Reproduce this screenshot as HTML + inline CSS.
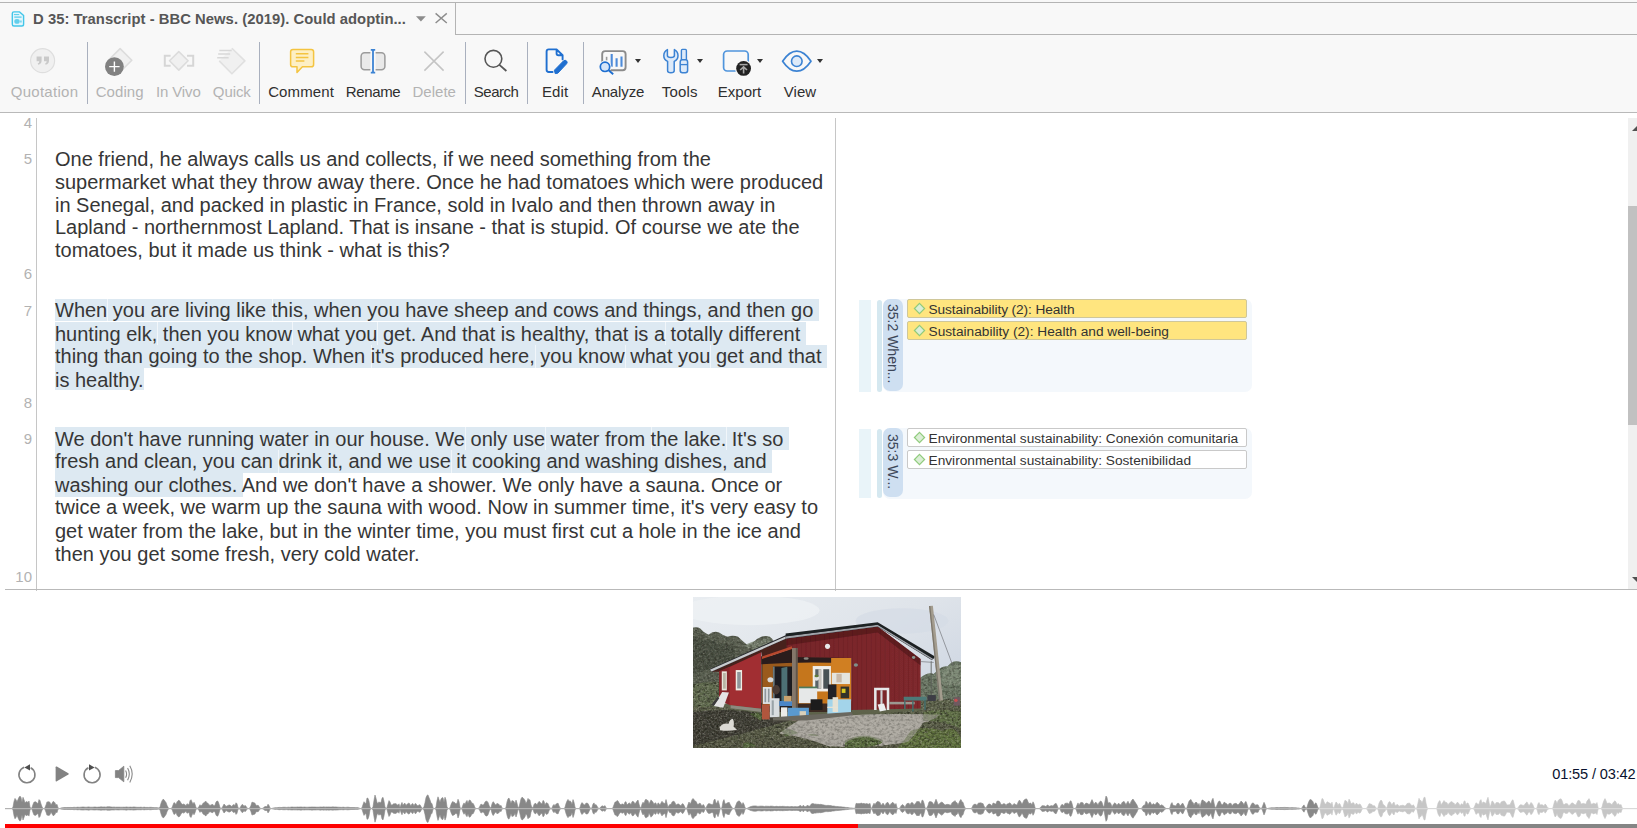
<!DOCTYPE html>
<html lang="en">
<head>
<meta charset="utf-8">
<title>D 35: Transcript</title>
<style>
html,body{margin:0;padding:0;}
body{width:1637px;height:828px;position:relative;overflow:hidden;background:#fff;font-family:"Liberation Sans",sans-serif;}
.abs{position:absolute;}
#hdr{position:absolute;left:0;top:0;width:1637px;height:112px;background:#f8f8f8;}
#topline{position:absolute;left:0;top:2px;width:1637px;height:1px;background:#b4b4b4;}
#tabv{position:absolute;left:455px;top:3px;width:1px;height:32px;background:#b4b4b4;}
#tabh{position:absolute;left:455px;top:34px;width:1182px;height:1px;background:#b4b4b4;}
#tbline{position:absolute;left:0;top:112px;width:1637px;height:1px;background:#b9b9b9;}
#title{position:absolute;left:33px;top:10px;letter-spacing:0.04px;font:bold 14.8px "Liberation Sans",sans-serif;color:#565656;white-space:pre;line-height:18px;}
.sep{position:absolute;top:42px;width:1px;height:62px;background:#a9b0be;}
.lbl{position:absolute;top:83px;font:15px "Liberation Sans",sans-serif;line-height:18px;color:#2f2f2f;white-space:pre;}
.lbl.dis{color:#b3b3b3;}
.dd{position:absolute;top:59px;width:0;height:0;border-left:3px solid transparent;border-right:3px solid transparent;border-top:4px solid #333;}
#doc{position:absolute;left:0;top:113px;width:1637px;height:477px;background:#fff;}
#gutter{position:absolute;left:36px;top:118px;width:1px;height:473px;background:#c6c6c6;}
#docr{position:absolute;left:835px;top:118px;width:1px;height:473px;background:#c6c6c6;}
#docb{position:absolute;left:5px;top:589px;width:1632px;height:1px;background:#b9b9b9;}
.ln{position:absolute;left:0;width:32px;text-align:right;font:15px "Liberation Sans",sans-serif;color:#b2b2b2;line-height:16px;}
.para{position:absolute;left:55px;width:790px;font:20px "Liberation Sans",sans-serif;line-height:23px;color:#363636;white-space:pre;margin:0;}
.hl{position:absolute;display:block;background:#dde9f2;}
.gp{position:absolute;display:block;width:1px;background:#f1f6fa;}
.code{position:absolute;left:907px;width:338px;height:17px;border-radius:2px;border:1px solid #c9c9c9;box-sizing:content-box;}
.code.y{background:#ffe57f;border-color:#cfc79a;}
.code.w{background:#fff;}
.code span{position:absolute;left:20.5px;top:1.5px;font:13.7px "Liberation Sans",sans-serif;line-height:16px;color:#333;white-space:pre;}
.dia{position:absolute;left:5px;top:2px;}
.vl{writing-mode:vertical-rl;width:20px;font:14px "Liberation Sans",sans-serif;line-height:20px;color:#3c4658;white-space:pre;}
.vlabel{position:absolute;font:13.4px "Liberation Sans",sans-serif;color:#3a4456;white-space:pre;transform-origin:0 0;transform:rotate(90deg);line-height:16px;}
#time{position:absolute;right:1.5px;top:765.5px;letter-spacing:-0.15px;font:14.6px "Liberation Sans",sans-serif;line-height:16px;color:#08112e;white-space:pre;}
</style>
</head>
<body>
<div id="hdr">
<div id="topline"></div><div id="tabv"></div><div id="tabh"></div>
<div id="title">D 35: Transcript - BBC News. (2019). Could adoptin...</div>
<div class="sep" style="left:87px"></div>
<div class="sep" style="left:259px"></div>
<div class="sep" style="left:465px"></div>
<div class="sep" style="left:527px"></div>
<div class="sep" style="left:583px"></div>
<div class="lbl dis" style="left:-15.5px;width:120px;text-align:center;letter-spacing:0.28px">Quotation</div>
<div class="lbl dis" style="left:59.7px;width:120px;text-align:center;letter-spacing:0.09px">Coding</div>
<div class="lbl dis" style="left:118.3px;width:120px;text-align:center;letter-spacing:-0.11px">In Vivo</div>
<div class="lbl dis" style="left:171.8px;width:120px;text-align:center;letter-spacing:-0.09px">Quick</div>
<div class="lbl" style="left:241.1px;width:120px;text-align:center;letter-spacing:0.13px">Comment</div>
<div class="lbl" style="left:313.0px;width:120px;text-align:center;letter-spacing:-0.35px">Rename</div>
<div class="lbl dis" style="left:374.2px;width:120px;text-align:center;letter-spacing:0.04px">Delete</div>
<div class="lbl" style="left:436.1px;width:120px;text-align:center;letter-spacing:-0.51px">Search</div>
<div class="lbl" style="left:495.2px;width:120px;text-align:center;letter-spacing:0.14px">Edit</div>
<div class="lbl" style="left:558.0px;width:120px;text-align:center;letter-spacing:-0.13px">Analyze</div>
<div class="lbl" style="left:619.7px;width:120px;text-align:center;letter-spacing:0.16px">Tools</div>
<div class="lbl" style="left:679.5px;width:120px;text-align:center;letter-spacing:0.02px">Export</div>
<div class="lbl" style="left:740.0px;width:120px;text-align:center;letter-spacing:0.06px">View</div>
<div class="dd" style="left:635.0px"></div>
<div class="dd" style="left:697.4px"></div>
<div class="dd" style="left:757.3px"></div>
<div class="dd" style="left:817.4px"></div>
<!--ICONS-->
<div id="tbline"></div>
</div>
<svg class="abs" style="left:0;top:0" width="840" height="112" viewBox="0 0 840 112">
<!-- tab document icon -->
<g>
<path d="M13.9 11.9 H19.6 L23.6 15.6 V24.2 Q23.6 26 21.8 26 H13.9 Q12.3 26 12.3 24.2 V13.6 Q12.3 11.9 13.9 11.9 Z" fill="#e4f6fc" stroke="#43c6e9" stroke-width="1.4" stroke-linejoin="round"/>
<path d="M14.3 14.6 H18.8" stroke="#43c6e9" stroke-width="0.9" stroke-linecap="round"/>
<path d="M14.3 17.1 H21.6" stroke="#5ccdeb" stroke-width="1.3"/>
<ellipse cx="17" cy="21.4" rx="2.7" ry="2.4" fill="#62cfec"/>
<path d="M20 21.4 H21.8" stroke="#7ed8f0" stroke-width="2"/>
</g>
<!-- tab dropdown + close -->
<path d="M416 16.2 H425.8 L420.9 21.4 Z" fill="#8c8c8c"/>
<path d="M435.6 13.4 L446.8 23 M446.8 13.4 L435.6 23" stroke="#8c8c8c" stroke-width="1.4" fill="none"/>
<!-- Quotation (disabled) -->
<circle cx="42.6" cy="60.7" r="12" fill="#f0f0f0" stroke="#dedede" stroke-width="1.2"/>
<path d="M36.6 56.6 h5 v4.2 q0 3.2 -3.4 4 l-0.5 -1.3 q1.6 -0.6 1.6 -2.3 h-2.7 z M44 56.6 h5 v4.2 q0 3.2 -3.4 4 l-0.5 -1.3 q1.6 -0.6 1.6 -2.3 h-2.7 z" fill="#c9c9c9"/>
<!-- Coding (disabled tag + plus circle) -->
<path d="M120.1 48.6 L131.8 60.3 L120.1 72 L108.4 60.3 Z" fill="#f0f0f0" stroke="#dcdcdc" stroke-width="1.6" stroke-linejoin="round"/>
<circle cx="114.4" cy="66.6" r="9.4" fill="#818181"/>
<path d="M114.4 61.4 V71.8 M109.2 66.6 H119.6" stroke="#fff" stroke-width="1.4"/>
<!-- In Vivo (disabled) -->
<path d="M170.6 55.8 H164.8 V65.8 H170.6 M187 55.8 H193.2 V65.8 H187" fill="none" stroke="#d6d6d6" stroke-width="2"/>
<path d="M178.8 51.6 L188.1 60.8 L178.8 70.1 L169.5 60.8 Z" fill="#f0f0f0" stroke="#dcdcdc" stroke-width="1.6" stroke-linejoin="round"/>
<!-- Quick (disabled) -->
<path d="M231.9 48.3 L244.9 60.9 L231.9 73.8 L219.2 60.9 Z" fill="#f0f0f0"/>
<path d="M231.9 48.3 L244.9 60.9 L231.9 73.8 L219.2 60.9" fill="none" stroke="#e0e0e0" stroke-width="1.6" stroke-linejoin="round"/>
<path d="M219.3 50.5 H231.7 M218.2 54.1 H230.2 M217.2 57.7 H228.6" stroke="#d8d8d8" stroke-width="1.5"/>
<!-- Comment -->
<path d="M293 49.4 H311.2 Q313.6 49.4 313.6 51.8 V64.4 Q313.6 66.8 311.2 66.8 H302.4 L297 72.4 V66.8 H293 Q290.6 66.8 290.6 64.4 V51.8 Q290.6 49.4 293 49.4 Z" fill="#fdefc4" stroke="#f4c440" stroke-width="1.5" stroke-linejoin="round"/>
<path d="M295.8 53.7 H308.4 M295.8 57.4 H308.4 M295.8 61.1 H304.4" stroke="#f4c440" stroke-width="1.5"/>
<!-- Rename -->
<rect x="361.1" y="52.7" width="23.8" height="17" rx="3.5" fill="#e9e9e9" stroke="#9b9b9b" stroke-width="1.5"/>
<rect x="370.4" y="50" width="5.2" height="22.6" fill="#f8f8f8"/>
<path d="M373 49.6 V72.8 M370.8 49.8 H375.2 M370.8 72.6 H375.2" stroke="#3c83d3" stroke-width="1.8"/>
<!-- Delete (disabled) -->
<path d="M424.4 51.6 L443.6 70.6 M443.6 51.6 L424.4 70.6" stroke="#c4c4c4" stroke-width="1.5"/>
<!-- Search -->
<circle cx="493.4" cy="58.8" r="8.4" fill="none" stroke="#565656" stroke-width="1.6"/>
<path d="M499.4 64.8 L506.4 71" stroke="#565656" stroke-width="1.8"/>
<!-- Edit -->
<path d="M556.6 49.4 H548.8 Q546.6 49.4 546.6 51.6 V69.8 Q546.6 72 548.8 72 H552.6 M556.6 49.4 L562.6 55.2 V59.4 M556.6 49.4 V53.4 Q556.6 55.2 558.4 55.2 H562.6" fill="none" stroke="#1f6fd0" stroke-width="1.9" stroke-linejoin="round" stroke-linecap="round"/>
<path d="M555.2 73.6 L554.4 70.2 L563.6 60.8 Q565.2 59.6 566.6 61 Q567.8 62.4 566.6 63.8 L557.8 73.2 Z" fill="#1f6fd0" stroke="#1f6fd0" stroke-width="1" stroke-linejoin="round"/>
<!-- Analyze -->
<rect x="602.2" y="51.1" width="23.4" height="19.2" rx="3" fill="none" stroke="#8b8b8b" stroke-width="1.9"/>
<path d="M606.6 56.8 V60.4" stroke="#9a9a9a" stroke-width="1.6"/>
<path d="M611.7 54 V66.8 M616.6 58.2 V66.8 M621.5 56.4 V66.8" stroke="#4d8bd9" stroke-width="2.1"/>
<circle cx="605" cy="66.8" r="6.4" fill="#f8f8f8"/>
<circle cx="605" cy="66.8" r="4.7" fill="#d6e5f8" stroke="#1f6fd0" stroke-width="1.7"/>
<path d="M608.6 70.2 L613.2 74.2" stroke="#1f6fd0" stroke-width="1.9"/>
<!-- Tools -->
<path d="M667.4 49.6 V55.6 Q667.4 57.6 670.9 57.6 Q674.4 57.6 674.4 55.6 V49.6 Q678 51.4 678 55.8 Q678 59.8 674.2 61.4 V70.8 Q674.2 72.8 670.9 72.8 Q667.6 72.8 667.6 70.8 V61.4 Q663.8 59.8 663.8 55.8 Q663.8 51.4 667.4 49.6 Z" fill="#ddeaf9" stroke="#3c83d3" stroke-width="1.5" stroke-linejoin="round"/>
<path d="M682.4 49.4 H685.4 Q686.4 49.4 686.4 50.4 V59.6 H681.4 V50.4 Q681.4 49.4 682.4 49.4 Z" fill="#ddeaf9" stroke="#3c83d3" stroke-width="1.4"/>
<path d="M680.2 62 Q680.2 59.8 682.4 59.8 H685.4 Q687.6 59.8 687.6 62 V70.6 Q687.6 72.8 685.4 72.8 H682.4 Q680.2 72.8 680.2 70.6 Z" fill="#ddeaf9" stroke="#3c83d3" stroke-width="1.5"/>
<path d="M680.2 64.6 H687.6" stroke="#3c83d3" stroke-width="1.3"/>
<!-- Export -->
<rect x="723.6" y="51" width="24.6" height="20" rx="3.6" fill="none" stroke="#4f94dc" stroke-width="1.7"/>
<circle cx="743.6" cy="68.4" r="8.6" fill="#f8f8f8"/>
<circle cx="743.6" cy="68.4" r="7.4" fill="#222"/>
<path d="M739.6 64.6 H747.6" stroke="#a8a8a8" stroke-width="1.5"/>
<path d="M743.6 73.6 V67.6 M740.2 70 L743.6 66.8 L747 70" fill="none" stroke="#a8a8a8" stroke-width="1.6"/>
<!-- View -->
<path d="M782.6 61.2 Q789.4 51.2 796.8 51.2 Q804.2 51.2 811 61.2 Q804.2 71.2 796.8 71.2 Q789.4 71.2 782.6 61.2 Z" fill="none" stroke="#3c83d3" stroke-width="1.7" stroke-linejoin="round"/>
<circle cx="796.8" cy="61.2" r="5.3" fill="#ddeaf9" stroke="#3c83d3" stroke-width="1.6"/>
</svg>
<div id="doc"></div>
<div id="gutter"></div>
<div id="docr"></div>
<div class="ln" style="top:114.8px">4</div>
<div class="ln" style="top:150.8px">5</div>
<div class="ln" style="top:265.8px">6</div>
<div class="ln" style="top:302.8px">7</div>
<div class="ln" style="top:394.8px">8</div>
<div class="ln" style="top:430.8px">9</div>
<div class="ln" style="top:568.8px">10</div>
<div class="hls">
<i class="hl" style="left:55px;top:299px;width:763.8px;height:22px"></i>
<i class="hl" style="left:55px;top:322px;width:750.8px;height:23px"></i>
<i class="hl" style="left:55px;top:345px;width:772.1px;height:23px"></i>
<i class="hl" style="left:55px;top:368px;width:88.6px;height:22px"></i>
<i class="hl" style="left:55px;top:427px;width:734.0px;height:23px"></i>
<i class="hl" style="left:55px;top:450px;width:717.1px;height:23px"></i>
<i class="hl" style="left:55px;top:473px;width:187.9px;height:24px"></i>
<i class="gp" style="left:107px;top:299px;height:22px"></i>
<i class="gp" style="left:272px;top:299px;height:22px"></i>
<i class="gp" style="left:157px;top:322px;height:23px"></i>
<i class="gp" style="left:292px;top:322px;height:23px"></i>
<i class="gp" style="left:377px;top:322px;height:23px"></i>
<i class="gp" style="left:665px;top:322px;height:23px"></i>
<i class="gp" style="left:371px;top:345px;height:23px"></i>
<i class="gp" style="left:535px;top:345px;height:23px"></i>
<i class="gp" style="left:625px;top:345px;height:23px"></i>
<i class="gp" style="left:710px;top:345px;height:23px"></i>
<i class="gp" style="left:465px;top:427px;height:23px"></i>
<i class="gp" style="left:545px;top:427px;height:23px"></i>
<i class="gp" style="left:651px;top:427px;height:23px"></i>
<i class="gp" style="left:726px;top:427px;height:23px"></i>
<i class="gp" style="left:278px;top:450px;height:23px"></i>
<i class="gp" style="left:451px;top:450px;height:23px"></i>
</div>
<div class="para" style="top:148px">One friend, he always calls us and collects, if we need something from the</div>
<div class="para" style="top:171px">supermarket what they throw away there. Once he had tomatoes which were produced</div>
<div class="para" style="top:194px">in Senegal, and packed in plastic in France, sold in Ivalo and then thrown away in</div>
<div class="para" style="top:216px">Lapland - northernmost Lapland. That is insane - that is stupid. Of course we ate the</div>
<div class="para" style="top:239px">tomatoes, but it made us think - what is this?</div>
<div class="para" style="top:299px">When you are living like this, when you have sheep and cows and things, and then go </div>
<div class="para" style="top:323px">hunting elk, then you know what you get. And that is healthy, that is a totally different </div>
<div class="para" style="top:345px">thing than going to the shop. When it's produced here, you know what you get and that </div>
<div class="para" style="top:369px">is healthy.</div>
<div class="para" style="top:428px">We don't have running water in our house. We only use water from the lake. It's so </div>
<div class="para" style="top:450px">fresh and clean, you can drink it, and we use it cooking and washing dishes, and </div>
<div class="para" style="top:474px">washing our clothes. And we don't have a shower. We only have a sauna. Once or</div>
<div class="para" style="top:496px">twice a week, we warm up the sauna with wood. Now in summer time, it's very easy to</div>
<div class="para" style="top:520px">get water from the lake, but in the winter time, you must first cut a hole in the ice and</div>
<div class="para" style="top:543px">then you get some fresh, very cold water.</div>
<div id="docb"></div>
<!-- margin area: quotation 35:2 -->
<div class="abs" style="left:859px;top:300px;width:12px;height:92px;background:#e9f4f9"></div>
<div class="abs" style="left:877px;top:300px;width:5px;height:92px;background:#d5e8f0;border-radius:2.5px"></div>
<div class="abs" style="left:883px;top:299px;width:369px;height:93px;background:#f4f8fc;border-radius:7px"></div>
<div class="abs pill" style="left:883px;top:299px;width:20px;height:92px;background:#cedff1;border-radius:7px"><div class="vl" style="padding-top:5px">35:2 When...</div></div>
<div class="code y" style="top:299px"><svg class="dia" width="13" height="13" viewBox="0 0 13 13"><path d="M6.5 1.4 L11.6 6.5 L6.5 11.6 L1.4 6.5 Z" fill="#dbeed6" stroke="#8fcb7c" stroke-width="1.2"/></svg><span style="letter-spacing:-0.09px">Sustainability (2): Health</span></div>
<div class="code y" style="top:321px"><svg class="dia" width="13" height="13" viewBox="0 0 13 13"><path d="M6.5 1.4 L11.6 6.5 L6.5 11.6 L1.4 6.5 Z" fill="#dbeed6" stroke="#8fcb7c" stroke-width="1.2"/></svg><span>Sustainability (2): Health and well-being</span></div>
<!-- margin area: quotation 35:3 -->
<div class="abs" style="left:859px;top:429px;width:12px;height:69px;background:#e9f4f9"></div>
<div class="abs" style="left:877px;top:429px;width:5px;height:69px;background:#d5e8f0;border-radius:2.5px"></div>
<div class="abs" style="left:883px;top:428px;width:369px;height:71px;background:#f4f8fc;border-radius:7px"></div>
<div class="abs pill" style="left:883px;top:428px;width:20px;height:69px;background:#cedff1;border-radius:7px"><div class="vl" style="padding-top:6px">35:3 W...</div></div>
<div class="code w" style="top:428px"><svg class="dia" width="13" height="13" viewBox="0 0 13 13"><path d="M6.5 1.4 L11.6 6.5 L6.5 11.6 L1.4 6.5 Z" fill="#dbeed6" stroke="#8fcb7c" stroke-width="1.2"/></svg><span>Environmental sustainability: Conexión comunitaria</span></div>
<div class="code w" style="top:450px"><svg class="dia" width="13" height="13" viewBox="0 0 13 13"><path d="M6.5 1.4 L11.6 6.5 L6.5 11.6 L1.4 6.5 Z" fill="#dbeed6" stroke="#8fcb7c" stroke-width="1.2"/></svg><span>Environmental sustainability: Sostenibilidad</span></div>
<!-- scrollbar -->
<div class="abs" style="left:1628px;top:118px;width:9px;height:471px;background:#f0f0f0"></div>
<div class="abs" style="left:1628px;top:206px;width:9px;height:219px;background:#c1c1c1"></div>
<div class="abs" style="left:1632px;top:126.3px;width:0;height:0;border-left:5px solid transparent;border-right:5px solid transparent;border-bottom:5px solid #505050"></div>
<div class="abs" style="left:1632px;top:577px;width:0;height:0;border-left:5px solid transparent;border-right:5px solid transparent;border-top:5px solid #505050"></div>
<svg class="abs" style="left:693px;top:597px" width="268" height="151" viewBox="62 57 1267 713" preserveAspectRatio="none">
<defs>
<linearGradient id="sky" x1="0" y1="0" x2="1" y2="1">
<stop offset="0" stop-color="#e9edf1"/><stop offset="0.45" stop-color="#dfe4ea"/><stop offset="1" stop-color="#c3cddd"/>
</linearGradient>
<linearGradient id="gnd" x1="0" y1="0" x2="0" y2="1">
<stop offset="0" stop-color="#656c52"/><stop offset="1" stop-color="#535541"/>
</linearGradient>
<linearGradient id="gable" x1="0" y1="0" x2="1" y2="0">
<stop offset="0" stop-color="#76252a"/><stop offset="1" stop-color="#7f292d"/>
</linearGradient>
<pattern id="siding" width="22" height="10" patternUnits="userSpaceOnUse"><rect width="22" height="10" fill="none"/><rect x="0" width="3" height="10" fill="#5e171b" opacity="0.55"/></pattern>
<filter id="soft" x="-2%" y="-2%" width="104%" height="104%"><feGaussianBlur stdDeviation="2.2"/></filter>
<filter id="grain" x="0" y="0" width="100%" height="100%" color-interpolation-filters="sRGB"><feTurbulence type="fractalNoise" baseFrequency="0.07 0.09" numOctaves="2" seed="4"/><feColorMatrix type="matrix" values="0 0 0 0 0.1  0 0 0 0 0.1  0 0 0 0 0.07  1.1 1.1 0 0 -0.95"/></filter>
<filter id="grainw" x="0" y="0" width="100%" height="100%" color-interpolation-filters="sRGB"><feTurbulence type="fractalNoise" baseFrequency="0.11 0.12" numOctaves="2" seed="11"/><feColorMatrix type="matrix" values="0 0 0 0 0.85  0 0 0 0 0.84  0 0 0 0 0.8  1.4 1.4 0 0 -1.3"/></filter>
<clipPath id="gclip"><path d="M62 470 L185 460 L185 560 L240 585 L385 605 L440 645 L600 645 L820 618 L1140 590 L1140 540 L1329 540 L1329 770 L62 770 Z"/></clipPath>
<clipPath id="tclip"><path d="M62 215 Q70 190 95 205 Q110 225 135 235 Q160 215 185 225 Q205 240 225 245 Q250 235 275 245 Q295 265 320 285 Q345 275 365 255 Q395 235 425 245 Q440 255 445 270 L330 320 L150 400 L185 410 L185 470 L62 480 Z M1140 440 Q1170 410 1200 420 Q1235 380 1265 385 Q1290 350 1330 365 L1340 545 L1140 545 Z"/></clipPath>
<clipPath id="pc"><rect x="62" y="57" width="1267" height="713"/></clipPath>
</defs>
<g clip-path="url(#pc)"><g filter="url(#soft)">
<rect x="40" y="40" width="1320" height="760" fill="url(#sky)"/>
<ellipse cx="330" cy="120" rx="330" ry="70" fill="#eef1f4" opacity="0.8"/>
<ellipse cx="1050" cy="170" rx="220" ry="60" fill="#d4dbe6" opacity="0.7"/>
<!-- left trees -->
<path d="M40 215 Q70 190 95 205 Q110 225 135 235 Q160 215 185 225 Q205 240 225 245 Q250 235 275 245 Q295 265 320 285 Q345 275 365 255 Q395 235 425 245 Q440 255 445 270 L330 330 L200 395 L200 480 L40 480 Z" fill="#5b6152"/>
<path d="M40 250 Q80 230 110 260 Q150 250 180 280 Q230 270 260 300 L260 380 L40 420 Z" fill="#464c3f" opacity="0.85"/>
<path d="M300 290 Q340 262 380 262 Q420 240 440 262 L360 310 Z" fill="#7f8a78" opacity="0.8"/>
<!-- right trees -->
<path d="M1135 440 Q1170 410 1200 420 Q1235 380 1265 385 Q1290 350 1330 365 L1340 560 L1135 560 Z" fill="#6c7966"/>
<path d="M1240 400 Q1280 370 1330 380 L1330 470 L1240 470 Z" fill="#86937f" opacity="0.7"/>
<!-- ground -->
<path d="M40 470 L200 455 L200 560 L1360 540 L1360 800 L40 800 Z" fill="url(#gnd)"/>
<path d="M62 470 Q120 455 185 462 L185 575 L62 575 Z" fill="#5f6a4d"/>
<path d="M62 600 Q250 575 420 615 L520 640 L300 700 L62 760 Z" fill="#3f3e35"/>
<!-- gravel -->
<path d="M560 640 Q800 600 1230 612 Q1200 640 1150 650 Q1120 700 1080 740 Q900 775 700 760 Q600 720 470 700 Z" fill="#aeaaa2"/>
<path d="M600 660 Q850 625 1150 630 Q1100 690 1000 720 Q800 740 650 700 Z" fill="#bab6ae" opacity="0.8"/>
<path d="M780 735 Q870 690 960 735 Q960 770 780 770 Z" fill="#5c7040"/>
<path d="M1090 690 Q1160 660 1240 690 Q1330 640 1340 800 L1000 800 Q1060 740 1090 690 Z" fill="#61733f"/>
<path d="M1150 600 Q1250 580 1340 600 L1340 680 Q1240 640 1150 640 Z" fill="#607046"/>
<path d="M330 610 Q370 590 400 625 L380 640 Z" fill="#55693c"/>
<path d="M300 750 Q330 735 360 760 L300 770 Z M480 690 Q520 670 560 700 L500 715 Z M600 710 Q630 695 660 715 Z" fill="#5a6e42"/>
<g clip-path="url(#gclip)"><rect x="62" y="440" width="1267" height="330" filter="url(#grain)"/><rect x="62" y="440" width="1267" height="330" filter="url(#grainw)" opacity="0.4"/></g>
<g clip-path="url(#tclip)"><rect x="62" y="180" width="1267" height="380" filter="url(#grain)" opacity="0.7"/><rect x="62" y="180" width="1267" height="380" filter="url(#grainw)" opacity="0.3"/></g>
<path d="M560 640 Q800 600 1230 612 Q1200 640 1150 650 Q1120 700 1080 740 Q1000 760 960 745 Q870 690 780 745 Q740 765 700 760 Q600 720 470 700 Z" fill="#aaa69e" opacity="0.55"/>
<!-- long side wall -->
<path d="M185 398 L385 305 L385 585 L240 568 L185 545 Z" fill="#a12e31"/>
<path d="M150 410 L503 252 L530 296 L388 344 L385 318 L185 410 Z" fill="#47211f"/>
<path d="M185 408 L235 386 L235 566 L185 545 Z" fill="#85262a"/>
<path d="M240 568 L385 585 L385 600 L240 582 Z" fill="#8d8b80"/>
<!-- long side windows -->
<rect x="198" y="408" width="24" height="90" fill="#e9e6dc"/><rect x="204" y="416" width="13" height="74" fill="#b8b3a4"/>
<rect x="264" y="402" width="30" height="96" fill="#f0eee6"/><rect x="271" y="411" width="17" height="78" fill="#8f979b"/>
<!-- leaning board -->
<path d="M200 505 L232 508 L205 580 L160 572 Z" fill="#e4e4e4"/>
<path d="M160 572 L150 566 L178 528 L186 535 Z" fill="#3a3a3a"/>
<!-- porch interior -->
<path d="M385 340 L810 345 L810 600 L385 600 Z" fill="#3a2a22"/>
<path d="M390 360 L530 352 L530 560 L390 575 Z" fill="#9a5a1e"/>
<path d="M555 352 L810 345 L810 560 L555 560 Z" fill="#c5761f"/>
<path d="M385 335 L810 340 L810 372 Q600 360 385 375 Z" fill="#2c1d1a"/>
<rect x="715" y="345" width="95" height="215" fill="#d07f22"/>
<!-- door opening -->
<rect x="440" y="385" width="90" height="200" fill="#1d1d20"/>
<path d="M480 392 L508 386 L508 560 L480 565 Z" fill="#4d6f75"/>
<rect x="440" y="385" width="8" height="190" fill="#6a7a7e"/>
<!-- porch window -->
<rect x="628" y="383" width="86" height="120" fill="#f0eeea"/>
<rect x="640" y="398" width="28" height="92" fill="#5a6468"/><rect x="678" y="398" width="28" height="92" fill="#4a5256"/>
<rect x="655" y="398" width="12" height="92" fill="#c9c6c0"/>
<!-- gable wall -->
<path d="M505 252 L935 196 L1138 350 L1138 583 L810 590 L810 345 L530 340 L505 300 Z" fill="url(#gable)"/>
<path d="M505 252 L935 196 L1138 350 L1138 583 L810 590 L810 345 L530 340 L505 300 Z" fill="url(#siding)"/>
<path d="M505 252 L935 196 L1138 350 L1138 380 L935 225 L505 285 Z" fill="#4a1418" opacity="0.6"/>
<!-- roof -->
<path d="M140 398 L500 238 L935 181 L1202 343 L1192 356 L935 197 L503 254 L150 410 Z" fill="#26282d"/>
<path d="M142 400 L500 243 L500 254 L150 409 Z" fill="#c9ccce"/>
<path d="M500 243 L935 188 L1196 348 L1194 354 L935 196 L502 253 Z" fill="#aeb3b8" opacity="0.9"/>
<path d="M500 229 L935 176 L1206 338 L1201 348 L935 188 L500 242 Z" fill="#1e2024"/>
<path d="M388 348 L530 300 L530 345 L388 345 Z" fill="#2c1d1a"/>
<path d="M388 338 L530 290 L530 302 L388 350 Z" fill="#b7492f"/>
<!-- post -->
<rect x="530" y="298" width="26" height="345" fill="#84776a"/>
<rect x="548" y="298" width="8" height="345" fill="#5e554c"/>
<!-- lamps -->
<circle cx="698" cy="290" r="12" fill="#e8e8ea"/>
<ellipse cx="597" cy="347" rx="12" ry="6" fill="#8c8880"/>
<ellipse cx="832" cy="378" rx="10" ry="8" fill="#7f8f8a"/>
<ellipse cx="1105" cy="343" rx="8" ry="7" fill="#8a9590"/>
<!-- objects on porch -->
<rect x="563" y="486" width="86" height="72" fill="#e6e8e8"/><rect x="563" y="480" width="86" height="8" fill="#4d7a5a"/>
<rect x="718" y="415" width="86" height="53" fill="#e4e4de"/><rect x="740" y="420" width="25" height="40" fill="#c9b9a8"/>
<rect x="392" y="482" width="42" height="80" fill="#dfe3e6"/><rect x="400" y="490" width="8" height="64" fill="#8e979c"/><rect x="416" y="490" width="8" height="64" fill="#8e979c"/>
<rect x="425" y="535" width="46" height="90" fill="#d9dde0"/><rect x="434" y="545" width="10" height="70" fill="#9aa3a8"/>
<rect x="388" y="565" width="36" height="70" fill="#b0563c"/>
<rect x="470" y="548" width="60" height="24" fill="#4a86c8"/><rect x="492" y="524" width="36" height="26" fill="#c9a36e"/>
<rect x="478" y="578" width="30" height="48" fill="#ecece8"/><rect x="510" y="580" width="100" height="48" fill="#5a9ad0"/>
<rect x="566" y="596" width="30" height="38" fill="#d9cfb8"/>
<rect x="618" y="540" width="56" height="50" fill="#1c1c1e"/>
<rect x="700" y="470" width="40" height="70" fill="#232326"/><rect x="760" y="480" width="40" height="55" fill="#33302c"/>
<rect x="765" y="490" width="18" height="20" fill="#d8c820"/>
<rect x="697" y="540" width="112" height="76" fill="#a3d4ea"/><rect x="722" y="530" width="26" height="70" fill="#e6e2d4"/>
<rect x="697" y="575" width="50" height="6" fill="#e8e4d6"/>
<ellipse cx="428" cy="448" rx="14" ry="12" fill="#d9d9d9"/><ellipse cx="455" cy="495" rx="18" ry="22" fill="#4a3a34"/>
<ellipse cx="646" cy="440" rx="12" ry="12" fill="#e1e1e1"/><ellipse cx="646" cy="430" rx="10" ry="6" fill="#5f7a3a"/>
<path d="M440 640 L600 640 L820 615 L810 600 L440 625 Z" fill="#6b675e"/>
<!-- white frame + jug on right wall -->
<path d="M918 485 H990 V590 H978 V497 H930 V590 H918 Z" fill="#e6e8ea"/>
<rect x="948" y="497" width="10" height="80" fill="#cfd2d6"/>
<path d="M935 565 L965 560 L975 592 L945 598 Z" fill="#eceef0"/>
<rect x="990" y="552" width="120" height="12" fill="#9c9890"/>
<!-- table -->
<path d="M1058 528 L1166 528 L1166 546 L1058 546 Z" fill="#4d7a78"/>
<rect x="1060" y="546" width="7" height="40" fill="#456e6c"/><rect x="1098" y="546" width="7" height="52" fill="#456e6c"/><rect x="1155" y="546" width="7" height="44" fill="#456e6c"/>
<!-- pole + wire -->
<path d="M1178 100 L1196 98 L1244 545 L1226 548 Z" fill="#a39c8e"/>
<path d="M1178 100 L1184 99 L1232 547 L1226 548 Z" fill="#7d776c"/>
<path d="M1200 140 L1290 380" stroke="#6b6e72" stroke-width="3" fill="none"/>
<path d="M1188 360 V520" stroke="#5c5f5a" stroke-width="4" fill="none"/>
<path d="M1140 362 L1200 366" stroke="#6b6e72" stroke-width="3" fill="none"/>
<!-- distant objects -->
<rect x="1170" y="520" width="40" height="28" fill="#3c3e44"/><rect x="1295" y="530" width="30" height="40" fill="#6e5a60"/><circle cx="1305" cy="545" r="8" fill="#c85050"/>
<!-- dog -->
<path d="M188 672 Q200 650 230 655 Q235 635 250 632 Q258 645 254 670 L270 684 Q230 692 190 686 Z" fill="#dcdad4"/>
</g></g>
</svg>
<svg class="abs" style="left:0;top:755px" width="160" height="40" viewBox="0 755 160 40">
<!-- rewind -->
<path d="M24.2 767.3 A8 8 0 1 0 30.6 767.7" fill="none" stroke="#828282" stroke-width="1.6"/>
<path d="M30 764.2 V770.6 L24.4 767.4 Z" fill="#4e4e4e"/>
<!-- play -->
<path d="M55.6 767.2 Q55.6 766 56.8 766.6 L68.4 773.2 Q69.4 773.9 68.4 774.6 L56.8 781.3 Q55.6 781.9 55.6 780.7 Z" fill="#828282"/>
<!-- forward -->
<path d="M94.8 767.3 A8 8 0 1 1 88.4 767.7" fill="none" stroke="#828282" stroke-width="1.6"/>
<path d="M89 764.2 V770.6 L94.6 767.4 Z" fill="#4e4e4e"/>
<!-- speaker -->
<path d="M115.4 770.6 H118.6 L123.8 766.2 V781.8 L118.6 777.6 H115.4 Z" fill="#828282" stroke="#828282" stroke-width="0.8" stroke-linejoin="round"/>
<path d="M125.6 770.4 Q127.6 774 125.6 777.8 M127.6 768 Q131 774 127.6 780.2 M129.8 765.8 Q134.6 774 129.8 782.4" fill="none" stroke="#8a8a8a" stroke-width="1.1"/>
</svg>
<div id="time">01:55 / 03:42</div>
<svg class="abs" style="left:0;top:786px" width="1637" height="42" viewBox="0 786 1637 42">
<path d="M5,808.5 L6,808.5 L7,808.5 L8,808.5 L9,808.5 L10,808.5 L11,808.5 L12,808.5 L13,807.1 L14,801.4 L15,798.4 L16,799.7 L17,801.8 L18,799.5 L19,797.3 L20,796.1 L21,797.4 L22,802.2 L23,797.3 L24,799.7 L25,802.7 L26,801.7 L27,801.7 L28,802.5 L29,801.0 L30,806.9 L31,808.5 L32,807.6 L33,804.4 L34,802.1 L35,801.9 L36,801.8 L37,803.2 L38,803.6 L39,799.6 L40,800.6 L41,804.0 L42,806.7 L43,808.5 L44,808.5 L45,807.5 L46,804.9 L47,801.8 L48,802.2 L49,801.5 L50,802.6 L51,804.8 L52,803.3 L53,801.6 L54,801.7 L55,802.9 L56,805.2 L57,804.3 L58,807.8 L59,808.5 L60,808.5 L61,808.0 L62,807.8 L63,807.7 L64,807.6 L65,807.5 L66,807.6 L67,807.6 L68,807.4 L69,807.6 L70,807.4 L71,807.5 L72,807.5 L73,807.5 L74,807.2 L75,807.4 L76,807.4 L77,807.3 L78,807.1 L79,807.4 L80,807.2 L81,807.2 L82,807.0 L83,807.0 L84,807.0 L85,807.2 L86,807.2 L87,807.2 L88,806.9 L89,806.9 L90,807.2 L91,807.2 L92,807.2 L93,807.2 L94,807.0 L95,807.0 L96,807.1 L97,807.3 L98,807.1 L99,807.1 L100,807.0 L101,806.8 L102,806.9 L103,807.0 L104,806.9 L105,806.9 L106,807.2 L107,806.8 L108,806.8 L109,806.8 L110,806.8 L111,807.0 L112,807.0 L113,807.2 L114,806.9 L115,807.2 L116,807.2 L117,807.1 L118,807.2 L119,807.1 L120,807.2 L121,807.2 L122,807.2 L123,807.2 L124,807.1 L125,807.3 L126,806.9 L127,807.0 L128,807.2 L129,807.2 L130,807.1 L131,807.1 L132,807.3 L133,807.0 L134,806.9 L135,807.1 L136,807.2 L137,807.3 L138,807.3 L139,807.3 L140,807.3 L141,807.1 L142,807.4 L143,807.4 L144,807.1 L145,807.3 L146,807.5 L147,807.3 L148,807.5 L149,807.4 L150,807.3 L151,807.3 L152,807.4 L153,807.6 L154,807.6 L155,807.7 L156,807.6 L157,807.7 L158,807.8 L159,808.0 L160,807.1 L161,803.3 L162,800.8 L163,799.3 L164,799.7 L165,801.2 L166,802.5 L167,805.3 L168,807.3 L169,808.5 L170,808.5 L171,808.5 L172,807.7 L173,805.0 L174,802.6 L175,803.2 L176,804.5 L177,801.9 L178,800.7 L179,800.2 L180,801.3 L181,803.0 L182,804.3 L183,804.6 L184,803.8 L185,804.9 L186,805.8 L187,803.7 L188,804.4 L189,804.8 L190,800.7 L191,799.7 L192,802.1 L193,804.1 L194,802.3 L195,804.3 L196,807.6 L197,808.5 L198,808.0 L199,806.5 L200,804.7 L201,805.8 L202,805.1 L203,803.2 L204,802.7 L205,801.8 L206,801.3 L207,803.1 L208,803.2 L209,804.8 L210,805.4 L211,805.0 L212,804.4 L213,804.6 L214,805.9 L215,804.9 L216,802.1 L217,801.0 L218,801.3 L219,804.0 L220,807.6 L221,808.5 L222,807.9 L223,806.1 L224,804.1 L225,805.0 L226,806.5 L227,806.0 L228,805.4 L229,805.0 L230,805.1 L231,806.0 L232,806.6 L233,804.8 L234,804.7 L235,805.4 L236,802.8 L237,803.8 L238,807.6 L239,808.5 L240,808.0 L241,806.0 L242,804.6 L243,804.8 L244,806.5 L245,805.3 L246,806.3 L247,808.0 L248,808.5 L249,808.5 L250,807.6 L251,805.3 L252,802.1 L253,802.5 L254,802.7 L255,803.2 L256,805.2 L257,805.7 L258,805.1 L259,806.5 L260,808.1 L261,808.5 L262,808.5 L263,808.2 L264,807.3 L265,806.5 L266,806.6 L267,806.7 L268,804.2 L269,805.5 L270,807.9 L271,808.5 L272,808.5 L273,808.0 L274,807.9 L275,807.7 L276,807.7 L277,807.7 L278,807.6 L279,807.4 L280,807.4 L281,807.5 L282,807.5 L283,807.2 L284,807.3 L285,807.2 L286,807.4 L287,807.4 L288,807.2 L289,807.2 L290,807.4 L291,807.0 L292,807.1 L293,807.0 L294,807.3 L295,807.0 L296,807.3 L297,806.9 L298,807.1 L299,807.1 L300,807.0 L301,806.9 L302,807.1 L303,807.2 L304,807.0 L305,807.1 L306,807.2 L307,807.2 L308,807.2 L309,807.1 L310,807.1 L311,807.1 L312,806.9 L313,807.1 L314,807.0 L315,807.1 L316,807.1 L317,807.2 L318,807.1 L319,807.2 L320,806.9 L321,807.0 L322,807.1 L323,807.0 L324,806.8 L325,807.2 L326,806.9 L327,807.0 L328,807.0 L329,806.9 L330,807.1 L331,807.0 L332,807.0 L333,806.8 L334,807.1 L335,806.9 L336,807.0 L337,807.1 L338,807.2 L339,807.2 L340,807.3 L341,807.3 L342,807.4 L343,807.1 L344,807.3 L345,807.4 L346,807.4 L347,807.2 L348,807.2 L349,807.3 L350,807.5 L351,807.5 L352,807.5 L353,807.5 L354,807.6 L355,807.6 L356,807.7 L357,807.6 L358,807.7 L359,807.9 L360,808.5 L361,808.5 L362,807.7 L363,804.6 L364,801.7 L365,803.2 L366,803.5 L367,798.0 L368,798.3 L369,801.2 L370,807.0 L371,808.5 L372,808.5 L373,806.8 L374,800.3 L375,795.0 L376,798.2 L377,802.6 L378,803.5 L379,801.8 L380,802.8 L381,802.6 L382,798.2 L383,797.3 L384,801.3 L385,806.9 L386,808.5 L387,807.4 L388,803.9 L389,800.6 L390,802.0 L391,804.7 L392,805.2 L393,804.3 L394,803.6 L395,803.9 L396,803.5 L397,804.7 L398,805.3 L399,803.8 L400,807.6 L401,804.6 L402,802.4 L403,805.6 L404,803.7 L405,803.3 L406,805.4 L407,804.2 L408,803.7 L409,802.9 L410,804.4 L411,805.7 L412,803.8 L413,803.7 L414,806.0 L415,803.7 L416,803.7 L417,805.6 L418,805.7 L419,804.9 L420,804.7 L421,806.5 L422,808.0 L423,808.5 L424,806.6 L425,802.7 L426,797.6 L427,795.4 L428,794.9 L429,797.6 L430,800.0 L431,802.8 L432,803.8 L433,807.5 L434,808.5 L435,808.5 L436,807.0 L437,800.8 L438,796.8 L439,799.6 L440,802.3 L441,799.1 L442,797.7 L443,797.8 L444,802.2 L445,797.2 L446,799.8 L447,806.8 L448,808.5 L449,808.5 L450,807.7 L451,804.6 L452,802.3 L453,801.4 L454,802.4 L455,802.8 L456,803.9 L457,803.3 L458,799.2 L459,801.6 L460,807.2 L461,808.5 L462,807.7 L463,804.8 L464,802.9 L465,804.5 L466,801.9 L467,800.4 L468,803.4 L469,800.4 L470,800.0 L471,801.4 L472,803.4 L473,803.2 L474,805.1 L475,807.7 L476,808.5 L477,808.5 L478,808.5 L479,808.0 L480,805.9 L481,804.0 L482,804.7 L483,805.1 L484,804.3 L485,802.0 L486,801.2 L487,801.2 L488,802.4 L489,805.2 L490,807.8 L491,807.6 L492,803.9 L493,801.7 L494,802.5 L495,804.6 L496,805.0 L497,803.3 L498,803.9 L499,804.3 L500,806.2 L501,805.3 L502,807.9 L503,808.5 L504,808.5 L505,808.5 L506,807.2 L507,801.9 L508,798.8 L509,798.1 L510,800.4 L511,803.6 L512,800.5 L513,801.1 L514,801.5 L515,804.1 L516,800.1 L517,803.1 L518,807.5 L519,807.2 L520,803.0 L521,798.8 L522,797.2 L523,797.8 L524,798.9 L525,800.5 L526,803.4 L527,801.6 L528,798.4 L529,799.7 L530,799.9 L531,804.9 L532,807.4 L533,807.7 L534,804.6 L535,803.3 L536,803.6 L537,804.8 L538,802.9 L539,801.4 L540,802.1 L541,803.5 L542,803.9 L543,800.4 L544,801.2 L545,804.9 L546,803.1 L547,802.7 L548,803.7 L549,806.2 L550,807.9 L551,808.5 L552,808.0 L553,805.5 L554,804.4 L555,806.1 L556,803.9 L557,803.7 L558,803.1 L559,805.7 L560,807.9 L561,808.5 L562,808.5 L563,808.5 L564,808.5 L565,807.3 L566,803.6 L567,801.1 L568,799.4 L569,801.2 L570,800.9 L571,801.7 L572,804.5 L573,799.6 L574,802.3 L575,807.2 L576,808.5 L577,808.5 L578,808.5 L579,808.5 L580,807.6 L581,804.2 L582,802.6 L583,803.6 L584,805.1 L585,804.8 L586,803.1 L587,803.2 L588,803.5 L589,805.6 L590,807.8 L591,808.5 L592,807.6 L593,804.0 L594,802.9 L595,805.2 L596,804.5 L597,806.1 L598,807.9 L599,808.5 L600,808.1 L601,806.8 L602,805.7 L603,806.3 L604,806.5 L605,805.6 L606,807.9 L607,808.5 L608,808.5 L609,808.5 L610,808.5 L611,808.5 L612,808.5 L613,807.4 L614,804.7 L615,802.1 L616,802.0 L617,800.6 L618,801.0 L619,802.8 L620,804.3 L621,804.7 L622,803.9 L623,804.0 L624,804.9 L625,802.0 L626,801.7 L627,804.8 L628,804.3 L629,802.8 L630,803.6 L631,804.4 L632,801.7 L633,801.2 L634,802.2 L635,804.1 L636,802.6 L637,801.1 L638,800.0 L639,804.0 L640,807.5 L641,807.7 L642,804.2 L643,802.2 L644,803.6 L645,800.4 L646,799.1 L647,800.4 L648,800.4 L649,804.1 L650,802.0 L651,799.9 L652,801.0 L653,802.2 L654,804.6 L655,802.8 L656,803.2 L657,805.8 L658,802.9 L659,803.5 L660,805.0 L661,803.0 L662,801.3 L663,802.7 L664,803.2 L665,803.8 L666,799.5 L667,803.3 L668,807.4 L669,805.5 L670,804.2 L671,804.6 L672,802.1 L673,801.5 L674,801.2 L675,802.8 L676,804.9 L677,804.6 L678,803.8 L679,804.3 L680,805.2 L681,805.7 L682,803.9 L683,803.7 L684,805.3 L685,807.4 L686,808.5 L687,807.7 L688,804.5 L689,802.0 L690,804.0 L691,802.5 L692,799.7 L693,798.5 L694,799.6 L695,801.2 L696,801.3 L697,803.5 L698,804.5 L699,803.7 L700,803.0 L701,804.5 L702,806.2 L703,804.5 L704,805.2 L705,807.9 L706,807.9 L707,805.7 L708,804.1 L709,803.5 L710,803.9 L711,804.2 L712,804.7 L713,804.4 L714,799.9 L715,799.2 L716,803.3 L717,802.9 L718,800.5 L719,803.4 L720,807.5 L721,808.5 L722,807.2 L723,801.6 L724,799.6 L725,803.8 L726,803.9 L727,802.7 L728,803.1 L729,802.1 L730,804.2 L731,806.1 L732,807.4 L733,808.5 L734,808.5 L735,807.5 L736,804.8 L737,802.2 L738,801.5 L739,800.8 L740,801.6 L741,803.0 L742,805.1 L743,802.6 L744,804.3 L745,807.6 L746,808.5 L747,808.5 L748,807.8 L749,807.5 L750,806.8 L751,806.6 L752,806.2 L753,806.0 L754,805.9 L755,805.9 L756,805.9 L757,806.2 L758,806.4 L759,806.2 L760,806.2 L761,806.0 L762,806.2 L763,806.1 L764,806.5 L765,806.4 L766,806.0 L767,806.4 L768,806.1 L769,806.5 L770,806.2 L771,806.1 L772,806.2 L773,806.2 L774,806.6 L775,806.6 L776,806.3 L777,806.3 L778,806.6 L779,806.6 L780,806.2 L781,806.6 L782,806.3 L783,806.3 L784,806.4 L785,806.4 L786,806.7 L787,806.4 L788,806.5 L789,806.7 L790,806.7 L791,806.6 L792,806.4 L793,806.7 L794,806.8 L795,806.5 L796,806.7 L797,806.7 L798,806.7 L799,806.3 L800,805.6 L801,805.7 L802,806.8 L803,805.5 L804,805.7 L805,806.9 L806,806.4 L807,805.4 L808,805.6 L809,806.3 L810,806.1 L811,804.3 L812,803.7 L813,803.5 L814,803.9 L815,804.2 L816,803.9 L817,804.5 L818,804.1 L819,804.6 L820,804.4 L821,804.3 L822,804.7 L823,804.8 L824,805.1 L825,805.3 L826,805.4 L827,805.5 L828,805.3 L829,805.5 L830,805.6 L831,805.6 L832,806.0 L833,806.1 L834,806.0 L835,806.3 L836,806.5 L837,806.4 L838,806.6 L839,806.7 L840,806.8 L841,806.8 L842,806.9 L843,807.1 L844,807.1 L845,807.3 L846,807.5 L847,807.4 L848,807.6 L849,807.8 L850,807.9 L851,807.9 L852,808.0 L853,808.2 L854,808.3 L855,808.4 L856,803.4 L857,803.5 L858,803.8 L859,803.4 L860,803.7 L861,803.1 L862,803.3 L863,803.9 L864,803.1 L865,804.2 L866,803.6 L867,803.7 L868,804.0 L869,804.2 L870,803.3 L871,808.5 L872,807.7 L873,805.2 L874,803.2 L875,804.7 L876,803.0 L877,801.7 L878,801.6 L879,801.9 L880,802.4 L881,805.3 L882,804.7 L883,803.1 L884,804.6 L885,806.0 L886,803.6 L887,802.5 L888,802.5 L889,804.3 L890,805.6 L891,803.7 L892,802.7 L893,802.4 L894,803.4 L895,805.1 L896,803.5 L897,807.7 L898,808.5 L899,808.5 L900,807.9 L901,805.9 L902,804.8 L903,804.8 L904,805.8 L905,807.7 L906,805.0 L907,803.5 L908,803.5 L909,803.2 L910,805.2 L911,802.9 L912,802.6 L913,803.1 L914,805.2 L915,803.9 L916,802.7 L917,801.2 L918,802.0 L919,801.3 L920,803.0 L921,804.3 L922,800.2 L923,800.4 L924,803.3 L925,807.4 L926,808.5 L927,807.7 L928,805.4 L929,802.0 L930,801.5 L931,801.8 L932,802.1 L933,803.5 L934,804.6 L935,801.7 L936,799.2 L937,801.5 L938,804.4 L939,804.4 L940,803.1 L941,802.6 L942,801.9 L943,803.0 L944,804.0 L945,804.9 L946,804.8 L947,804.2 L948,804.6 L949,804.4 L950,805.2 L951,805.0 L952,802.9 L953,801.9 L954,801.8 L955,800.6 L956,802.6 L957,802.7 L958,805.0 L959,802.8 L960,800.4 L961,799.5 L962,801.9 L963,802.3 L964,805.6 L965,807.9 L966,808.5 L967,808.5 L968,808.5 L969,808.5 L970,808.5 L971,808.5 L972,807.8 L973,805.4 L974,804.3 L975,804.3 L976,804.3 L977,805.4 L978,803.4 L979,802.9 L980,803.0 L981,802.7 L982,803.5 L983,803.5 L984,806.0 L985,807.7 L986,807.9 L987,805.8 L988,804.6 L989,804.1 L990,804.0 L991,805.0 L992,805.7 L993,803.1 L994,803.2 L995,803.9 L996,804.1 L997,801.1 L998,801.1 L999,801.1 L1000,802.2 L1001,804.5 L1002,804.7 L1003,803.7 L1004,803.9 L1005,803.8 L1006,805.8 L1007,803.9 L1008,803.9 L1009,803.2 L1010,802.8 L1011,804.0 L1012,805.6 L1013,804.8 L1014,803.5 L1015,804.2 L1016,804.8 L1017,805.1 L1018,802.4 L1019,800.4 L1020,800.6 L1021,802.3 L1022,803.9 L1023,802.3 L1024,800.0 L1025,799.6 L1026,798.8 L1027,799.3 L1028,801.8 L1029,803.8 L1030,803.1 L1031,803.3 L1032,804.8 L1033,801.8 L1034,803.7 L1035,807.5 L1036,808.5 L1037,808.5 L1038,808.5 L1039,808.5 L1040,808.1 L1041,806.9 L1042,805.6 L1043,805.9 L1044,805.6 L1045,806.3 L1046,806.6 L1047,805.2 L1048,805.0 L1049,806.6 L1050,806.0 L1051,805.8 L1052,805.6 L1053,806.2 L1054,804.6 L1055,803.9 L1056,803.2 L1057,805.1 L1058,807.9 L1059,808.5 L1060,808.0 L1061,805.6 L1062,804.3 L1063,804.9 L1064,805.7 L1065,803.3 L1066,803.4 L1067,802.9 L1068,803.4 L1069,804.3 L1070,801.2 L1071,800.8 L1072,803.5 L1073,807.5 L1074,808.5 L1075,808.5 L1076,807.8 L1077,805.1 L1078,802.9 L1079,805.2 L1080,803.4 L1081,802.2 L1082,802.7 L1083,802.7 L1084,805.4 L1085,804.1 L1086,803.1 L1087,803.3 L1088,803.8 L1089,804.4 L1090,804.1 L1091,801.7 L1092,799.6 L1093,801.8 L1094,804.5 L1095,802.7 L1096,802.3 L1097,803.4 L1098,804.9 L1099,802.7 L1100,801.4 L1101,801.0 L1102,802.4 L1103,805.6 L1104,806.8 L1105,801.1 L1106,796.0 L1107,797.4 L1108,802.8 L1109,802.9 L1110,802.4 L1111,804.1 L1112,807.1 L1113,804.9 L1114,803.5 L1115,802.8 L1116,803.9 L1117,805.5 L1118,803.7 L1119,803.4 L1120,804.4 L1121,805.1 L1122,802.5 L1123,802.1 L1124,801.3 L1125,803.0 L1126,804.8 L1127,802.7 L1128,801.2 L1129,803.5 L1130,804.2 L1131,801.7 L1132,800.0 L1133,799.0 L1134,800.6 L1135,802.0 L1136,803.6 L1137,805.1 L1138,807.9 L1139,808.5 L1140,808.5 L1141,808.5 L1142,808.0 L1143,805.9 L1144,805.3 L1145,804.9 L1146,801.3 L1147,802.3 L1148,805.0 L1149,803.1 L1150,801.8 L1151,803.4 L1152,805.2 L1153,803.7 L1154,803.9 L1155,805.1 L1156,803.5 L1157,802.2 L1158,802.9 L1159,803.9 L1160,805.7 L1161,805.3 L1162,804.7 L1163,805.8 L1164,806.6 L1165,807.8 L1166,808.5 L1167,808.5 L1168,808.5 L1169,808.5 L1170,807.6 L1171,803.9 L1172,802.6 L1173,805.3 L1174,805.6 L1175,805.7 L1176,806.0 L1177,803.7 L1178,803.2 L1179,803.6 L1180,806.1 L1181,805.1 L1182,803.6 L1183,803.4 L1184,805.6 L1185,807.9 L1186,808.5 L1187,807.4 L1188,804.3 L1189,801.3 L1190,800.1 L1191,799.5 L1192,802.0 L1193,802.4 L1194,804.9 L1195,802.8 L1196,802.3 L1197,802.7 L1198,805.3 L1199,803.4 L1200,807.3 L1201,803.2 L1202,800.1 L1203,800.0 L1204,801.4 L1205,801.5 L1206,803.6 L1207,802.7 L1208,801.6 L1209,801.0 L1210,802.6 L1211,804.0 L1212,800.0 L1213,798.3 L1214,802.9 L1215,807.2 L1216,807.5 L1217,805.0 L1218,802.6 L1219,801.1 L1220,801.2 L1221,803.6 L1222,805.1 L1223,804.3 L1224,802.3 L1225,802.5 L1226,803.5 L1227,804.0 L1228,805.4 L1229,803.5 L1230,803.4 L1231,803.3 L1232,805.8 L1233,804.4 L1234,803.8 L1235,803.5 L1236,803.3 L1237,804.1 L1238,805.1 L1239,803.7 L1240,803.0 L1241,801.1 L1242,802.0 L1243,803.0 L1244,805.1 L1245,802.2 L1246,801.4 L1247,804.3 L1248,807.7 L1249,808.5 L1250,807.6 L1251,805.1 L1252,803.3 L1253,802.9 L1254,803.6 L1255,805.4 L1256,804.7 L1257,804.9 L1258,804.7 L1259,806.9 L1260,807.9 L1261,808.5 L1262,807.7 L1263,805.0 L1264,802.3 L1265,804.3 L1266,807.7 L1267,808.5 L1268,808.5 L1269,808.0 L1270,808.0 L1271,807.8 L1272,807.7 L1273,807.8 L1274,807.8 L1275,807.7 L1276,807.6 L1277,807.5 L1278,807.6 L1279,807.7 L1280,807.5 L1281,807.5 L1282,807.6 L1283,807.5 L1284,807.4 L1285,807.4 L1286,807.5 L1287,807.6 L1288,807.5 L1289,807.7 L1290,807.7 L1291,807.7 L1292,807.6 L1293,807.7 L1294,807.7 L1295,807.8 L1296,807.8 L1297,807.9 L1298,808.0 L1299,808.0 L1300,808.5 L1301,808.5 L1302,808.0 L1303,806.0 L1304,804.9 L1305,807.0 L1306,808.1 L1307,807.5 L1308,803.8 L1309,801.3 L1310,799.5 L1311,799.8 L1312,800.5 L1313,801.8 L1314,804.7 L1315,803.6 L1316,802.8 L1317,805.0 L1318,807.8 L1319,808.5 L1319,808.5 L1318,809.3 L1317,812.1 L1316,814.3 L1315,813.5 L1314,812.4 L1313,815.4 L1312,816.6 L1311,817.3 L1310,817.7 L1309,815.9 L1308,813.3 L1307,809.6 L1306,808.9 L1305,810.1 L1304,812.2 L1303,811.0 L1302,809.0 L1301,808.5 L1300,808.5 L1299,809.1 L1298,809.0 L1297,809.1 L1296,809.2 L1295,809.2 L1294,809.3 L1293,809.3 L1292,809.4 L1291,809.3 L1290,809.3 L1289,809.3 L1288,809.5 L1287,809.4 L1286,809.5 L1285,809.6 L1284,809.6 L1283,809.5 L1282,809.4 L1281,809.5 L1280,809.5 L1279,809.3 L1278,809.4 L1277,809.5 L1276,809.4 L1275,809.3 L1274,809.2 L1273,809.3 L1272,809.3 L1271,809.2 L1270,809.0 L1269,809.0 L1268,808.5 L1267,808.5 L1266,809.3 L1265,812.7 L1264,814.9 L1263,812.0 L1262,809.3 L1261,808.5 L1260,809.1 L1259,810.1 L1258,812.4 L1257,812.1 L1256,812.4 L1255,811.7 L1254,813.5 L1253,814.3 L1252,813.8 L1251,812.0 L1250,809.4 L1249,808.5 L1248,809.4 L1247,812.8 L1246,815.7 L1245,815.0 L1244,811.9 L1243,814.1 L1242,815.1 L1241,816.0 L1240,814.1 L1239,813.4 L1238,811.9 L1237,813.0 L1236,813.8 L1235,813.6 L1234,813.3 L1233,812.6 L1232,811.2 L1231,813.8 L1230,813.7 L1229,813.6 L1228,811.6 L1227,813.0 L1226,813.6 L1225,814.6 L1224,814.8 L1223,812.8 L1222,812.0 L1221,813.5 L1220,815.9 L1219,816.1 L1218,814.5 L1217,812.1 L1216,809.6 L1215,809.9 L1214,814.2 L1213,818.9 L1212,817.1 L1211,813.1 L1210,814.5 L1209,816.2 L1208,815.5 L1207,814.5 L1206,813.5 L1205,815.6 L1204,815.8 L1203,817.2 L1202,817.1 L1201,814.0 L1200,809.7 L1199,813.7 L1198,811.7 L1197,814.5 L1196,814.8 L1195,814.3 L1194,812.2 L1193,814.8 L1192,815.2 L1191,817.7 L1190,817.1 L1189,815.9 L1188,812.8 L1187,809.6 L1186,808.5 L1185,809.1 L1184,811.4 L1183,813.7 L1182,813.5 L1181,811.9 L1180,810.9 L1179,813.5 L1178,813.9 L1177,813.4 L1176,811.0 L1175,811.4 L1174,811.5 L1173,811.7 L1172,814.6 L1171,813.2 L1170,809.4 L1169,808.5 L1168,808.5 L1167,808.5 L1166,808.5 L1165,809.2 L1164,810.5 L1163,811.2 L1162,812.4 L1161,811.7 L1160,811.4 L1159,813.2 L1158,814.2 L1157,814.9 L1156,813.7 L1155,811.9 L1154,813.1 L1153,813.4 L1152,811.9 L1151,813.7 L1150,815.3 L1149,814.0 L1148,812.1 L1147,814.9 L1146,815.8 L1145,812.2 L1144,811.7 L1143,811.2 L1142,809.0 L1141,808.5 L1140,808.5 L1139,808.5 L1138,809.2 L1137,812.0 L1136,813.5 L1135,815.2 L1134,816.6 L1133,818.2 L1132,817.2 L1131,815.4 L1130,812.9 L1129,813.6 L1128,815.9 L1127,814.5 L1126,812.3 L1125,814.1 L1124,815.8 L1123,815.1 L1122,814.6 L1121,811.9 L1120,812.7 L1119,813.7 L1118,813.4 L1117,811.5 L1116,813.1 L1115,814.3 L1114,813.6 L1113,812.1 L1112,809.9 L1111,813.0 L1110,814.8 L1109,814.3 L1108,814.3 L1107,819.8 L1106,821.3 L1105,816.1 L1104,810.2 L1103,811.5 L1102,814.7 L1101,816.1 L1100,815.8 L1099,814.4 L1098,812.2 L1097,813.7 L1096,814.9 L1095,814.4 L1094,812.5 L1093,815.3 L1092,817.6 L1091,815.5 L1090,813.0 L1089,812.7 L1088,813.3 L1087,813.8 L1086,814.0 L1085,813.0 L1084,811.6 L1083,814.4 L1082,814.4 L1081,814.9 L1080,813.7 L1079,811.9 L1078,814.2 L1077,812.0 L1076,809.2 L1075,808.5 L1074,808.5 L1073,809.5 L1072,813.6 L1071,816.3 L1070,816.0 L1069,812.8 L1068,813.7 L1067,814.2 L1066,813.7 L1065,813.8 L1064,811.4 L1063,812.1 L1062,812.7 L1061,811.5 L1060,809.0 L1059,808.5 L1058,809.2 L1057,811.9 L1056,813.9 L1055,813.2 L1054,812.5 L1053,810.8 L1052,811.4 L1051,811.2 L1050,811.1 L1049,810.5 L1048,812.0 L1047,811.9 L1046,810.5 L1045,810.7 L1044,811.5 L1043,811.2 L1042,811.4 L1041,810.1 L1040,808.9 L1039,808.5 L1038,808.5 L1037,808.5 L1036,808.5 L1035,809.5 L1034,813.4 L1033,815.3 L1032,812.2 L1031,813.8 L1030,814.1 L1029,813.3 L1028,815.3 L1027,817.8 L1026,818.4 L1025,817.6 L1024,817.2 L1023,814.8 L1022,813.2 L1021,814.9 L1020,816.6 L1019,816.8 L1018,814.7 L1017,812.0 L1016,812.3 L1015,812.9 L1014,813.6 L1013,812.3 L1012,811.4 L1011,813.1 L1010,814.3 L1009,813.9 L1008,813.2 L1007,813.2 L1006,811.3 L1005,813.3 L1004,813.2 L1003,813.4 L1002,812.4 L1001,812.6 L1000,814.9 L999,816.1 L998,816.1 L997,816.0 L996,813.0 L995,813.2 L994,813.9 L993,814.0 L992,811.4 L991,812.1 L990,813.1 L989,813.0 L988,812.4 L987,811.2 L986,809.2 L985,809.3 L984,811.0 L983,813.6 L982,813.6 L981,814.4 L980,814.1 L979,814.2 L978,813.7 L977,811.6 L976,812.8 L975,812.7 L974,812.8 L973,811.6 L972,809.2 L971,808.5 L970,808.5 L969,808.5 L968,808.5 L967,808.5 L966,808.5 L965,809.2 L964,811.5 L963,814.8 L962,815.2 L961,817.7 L960,816.7 L959,814.3 L958,812.1 L957,814.4 L956,814.5 L955,816.5 L954,815.3 L953,815.2 L952,814.2 L951,812.1 L950,811.9 L949,812.6 L948,812.5 L947,812.9 L946,812.3 L945,812.1 L944,813.1 L943,814.1 L942,815.3 L941,814.6 L940,814.0 L939,812.7 L938,812.7 L937,815.6 L936,818.0 L935,815.4 L934,812.5 L933,813.6 L932,815.1 L931,815.4 L930,815.7 L929,815.1 L928,811.7 L927,809.3 L926,808.5 L925,809.6 L924,813.8 L923,816.8 L922,816.9 L921,812.8 L920,814.1 L919,815.9 L918,815.1 L917,815.9 L916,814.4 L915,813.2 L914,811.8 L913,814.0 L912,814.5 L911,814.2 L910,811.9 L909,813.9 L908,813.6 L907,813.6 L906,812.0 L905,809.3 L904,811.2 L903,812.2 L902,812.3 L901,811.2 L900,809.1 L899,808.5 L898,808.5 L897,809.3 L896,813.6 L895,812.0 L894,813.7 L893,814.7 L892,814.4 L891,813.4 L890,811.5 L889,812.8 L888,814.6 L887,814.6 L886,813.5 L885,811.1 L884,812.5 L883,814.0 L882,812.4 L881,811.8 L880,814.7 L879,815.3 L878,815.6 L877,815.4 L876,814.1 L875,812.4 L874,813.9 L873,811.9 L872,809.3 L871,808.5 L870,813.8 L869,812.9 L868,813.1 L867,813.4 L866,813.5 L865,812.9 L864,814.0 L863,813.2 L862,813.8 L861,814.0 L860,813.4 L859,813.7 L858,813.3 L857,813.6 L856,813.7 L855,808.6 L854,808.7 L853,808.9 L852,809.0 L851,809.1 L850,809.1 L849,809.2 L848,809.4 L847,809.6 L846,809.6 L845,809.7 L844,809.9 L843,809.9 L842,810.1 L841,810.2 L840,810.2 L839,810.4 L838,810.4 L837,810.6 L836,810.6 L835,810.7 L834,811.0 L833,811.0 L832,811.1 L831,811.5 L830,811.4 L829,811.5 L828,811.7 L827,811.6 L826,811.6 L825,811.7 L824,812.0 L823,812.3 L822,812.4 L821,812.7 L820,812.7 L819,812.5 L818,813.0 L817,812.6 L816,813.2 L815,812.9 L814,813.2 L813,813.6 L812,813.4 L811,812.8 L810,811.0 L809,810.8 L808,811.4 L807,811.7 L806,810.6 L805,810.1 L804,811.3 L803,811.6 L802,810.2 L801,811.4 L800,811.5 L799,810.7 L798,810.4 L797,810.4 L796,810.3 L795,810.6 L794,810.3 L793,810.4 L792,810.6 L791,810.5 L790,810.3 L789,810.3 L788,810.5 L787,810.6 L786,810.4 L785,810.6 L784,810.6 L783,810.7 L782,810.7 L781,810.5 L780,810.8 L779,810.4 L778,810.4 L777,810.7 L776,810.7 L775,810.4 L774,810.4 L773,810.9 L772,810.8 L771,811.0 L770,810.9 L769,810.5 L768,810.9 L767,810.7 L766,811.1 L765,810.6 L764,810.6 L763,810.9 L762,810.9 L761,811.1 L760,810.8 L759,810.8 L758,810.7 L757,810.9 L756,811.2 L755,811.2 L754,811.2 L753,811.1 L752,810.8 L751,810.5 L750,810.3 L749,809.5 L748,809.2 L747,808.5 L746,808.5 L745,809.4 L744,812.8 L743,814.5 L742,812.0 L741,814.1 L740,815.6 L739,816.4 L738,815.6 L737,814.9 L736,812.2 L735,809.5 L734,808.5 L733,808.5 L732,809.6 L731,810.9 L730,812.8 L729,815.0 L728,814.0 L727,814.4 L726,813.2 L725,813.3 L724,817.6 L723,815.5 L722,809.8 L721,808.5 L720,809.5 L719,813.7 L718,816.7 L717,814.2 L716,813.8 L715,818.0 L714,817.3 L713,812.7 L712,812.3 L711,812.9 L710,813.2 L709,813.6 L708,813.0 L707,811.4 L706,809.1 L705,809.1 L704,811.9 L703,812.6 L702,810.9 L701,812.6 L700,814.1 L699,813.4 L698,812.6 L697,813.6 L696,815.9 L695,815.9 L694,817.6 L693,818.7 L692,817.5 L691,814.6 L690,813.1 L689,815.2 L688,812.6 L687,809.3 L686,808.5 L685,809.7 L684,811.8 L683,813.4 L682,813.2 L681,811.4 L680,811.9 L679,812.8 L678,813.3 L677,812.4 L676,812.1 L675,814.3 L674,815.9 L673,815.6 L672,815.1 L671,812.5 L670,812.9 L669,811.6 L668,809.6 L667,813.8 L666,817.7 L665,813.3 L664,813.9 L663,814.4 L662,815.9 L661,814.1 L660,812.1 L659,813.6 L658,814.2 L657,811.2 L656,813.9 L655,814.3 L654,812.4 L653,814.9 L652,816.1 L651,817.2 L650,815.1 L649,813.0 L648,816.8 L647,816.8 L646,818.1 L645,816.8 L644,813.5 L643,814.9 L642,812.9 L641,809.3 L640,809.5 L639,813.1 L638,817.2 L637,816.0 L636,814.5 L635,813.0 L634,814.9 L633,815.9 L632,815.4 L631,812.7 L630,813.5 L629,814.3 L628,812.8 L627,812.3 L626,815.5 L625,815.1 L624,812.2 L623,813.1 L622,813.2 L621,812.3 L620,812.8 L619,814.3 L618,816.1 L617,816.5 L616,815.1 L615,815.0 L614,812.4 L613,809.6 L612,808.5 L611,808.5 L610,808.5 L609,808.5 L608,808.5 L607,808.5 L606,809.1 L605,811.4 L604,810.5 L603,810.7 L602,811.3 L601,810.2 L600,808.9 L599,808.5 L598,809.1 L597,811.0 L596,812.6 L595,811.8 L594,814.2 L593,813.1 L592,809.4 L591,808.5 L590,809.2 L589,811.5 L588,813.6 L587,813.9 L586,814.0 L585,812.3 L584,812.0 L583,813.5 L582,814.5 L581,812.9 L580,809.5 L579,808.5 L578,808.5 L577,808.5 L576,808.5 L575,809.9 L574,814.8 L573,817.5 L572,812.6 L571,815.4 L570,816.3 L569,815.9 L568,817.7 L567,816.1 L566,813.5 L565,809.7 L564,808.5 L563,808.5 L562,808.5 L561,808.5 L560,809.2 L559,811.4 L558,814.0 L557,813.4 L556,813.2 L555,810.9 L554,812.7 L553,811.6 L552,809.0 L551,808.5 L550,809.1 L549,810.8 L548,813.4 L547,814.4 L546,814.0 L545,812.2 L544,816.0 L543,816.8 L542,813.2 L541,813.6 L540,815.1 L539,815.8 L538,814.2 L537,812.3 L536,813.5 L535,813.8 L534,812.4 L533,809.3 L532,809.6 L531,812.2 L530,817.3 L529,817.4 L528,818.8 L527,815.5 L526,813.7 L525,816.7 L524,818.3 L523,819.4 L522,820.0 L521,818.3 L520,814.1 L519,809.8 L518,809.5 L517,814.0 L516,817.0 L515,813.0 L514,815.6 L513,816.1 L512,816.6 L511,813.5 L510,816.8 L509,819.1 L508,818.4 L507,815.3 L506,809.8 L505,808.5 L504,808.5 L503,808.5 L502,809.1 L501,811.7 L500,810.8 L499,812.8 L498,813.2 L497,813.8 L496,812.0 L495,812.4 L494,814.6 L493,815.5 L492,813.2 L491,809.4 L490,809.2 L489,811.9 L488,814.8 L487,816.0 L486,816.0 L485,815.1 L484,812.7 L483,812.0 L482,812.3 L481,813.1 L480,811.1 L479,809.0 L478,808.5 L477,808.5 L476,808.5 L475,809.3 L474,812.0 L473,813.9 L472,813.7 L471,815.8 L470,817.2 L469,816.8 L468,813.7 L467,816.7 L466,815.3 L465,812.5 L464,814.3 L463,812.2 L462,809.3 L461,808.5 L460,809.8 L459,815.5 L458,818.0 L457,813.8 L456,813.2 L455,814.3 L454,814.7 L453,815.7 L452,814.8 L451,812.4 L450,809.3 L449,808.5 L448,808.5 L447,810.3 L446,817.4 L445,820.1 L444,814.9 L443,819.4 L442,819.5 L441,818.1 L440,814.8 L439,817.6 L438,820.4 L437,816.3 L436,810.0 L435,808.5 L434,808.5 L433,809.5 L432,813.3 L431,814.3 L430,817.2 L429,819.6 L428,822.4 L427,821.9 L426,819.7 L425,814.4 L424,810.4 L423,808.5 L422,809.0 L421,810.6 L420,812.3 L419,812.1 L418,811.3 L417,811.4 L416,813.4 L415,813.4 L414,811.1 L413,813.4 L412,813.3 L411,811.4 L410,812.7 L409,814.2 L408,813.4 L407,812.8 L406,811.6 L405,813.8 L404,813.3 L403,811.4 L402,814.8 L401,812.5 L400,809.4 L399,813.3 L398,811.8 L397,812.4 L396,813.6 L395,813.2 L394,813.5 L393,812.8 L392,811.9 L391,812.3 L390,815.1 L389,816.5 L388,813.2 L387,809.6 L386,808.5 L385,810.1 L384,815.9 L383,819.9 L382,819.0 L381,814.5 L380,814.3 L379,815.3 L378,813.6 L377,814.5 L376,819.0 L375,822.2 L374,816.8 L373,810.3 L372,808.5 L371,808.5 L370,810.0 L369,815.9 L368,818.9 L367,819.3 L366,813.6 L365,813.9 L364,815.4 L363,812.5 L362,809.3 L361,808.5 L360,808.5 L359,809.1 L358,809.3 L357,809.4 L356,809.3 L355,809.4 L354,809.4 L353,809.5 L352,809.5 L351,809.5 L350,809.6 L349,809.7 L348,809.8 L347,809.8 L346,809.6 L345,809.6 L344,809.7 L343,809.9 L342,809.6 L341,809.7 L340,809.7 L339,809.8 L338,809.9 L337,810.0 L336,810.0 L335,810.1 L334,809.9 L333,810.2 L332,810.1 L331,810.0 L330,809.9 L329,810.2 L328,810.0 L327,810.0 L326,810.2 L325,809.8 L324,810.2 L323,810.0 L322,809.9 L321,810.1 L320,810.2 L319,809.8 L318,809.9 L317,809.8 L316,810.0 L315,809.9 L314,810.0 L313,809.9 L312,810.2 L311,809.9 L310,809.9 L309,809.9 L308,809.8 L307,809.9 L306,809.8 L305,809.9 L304,810.0 L303,809.8 L302,809.9 L301,810.2 L300,810.0 L299,809.9 L298,809.9 L297,810.1 L296,809.7 L295,810.1 L294,809.7 L293,810.0 L292,809.9 L291,810.0 L290,809.7 L289,809.8 L288,809.9 L287,809.6 L286,809.6 L285,809.8 L284,809.7 L283,809.8 L282,809.5 L281,809.5 L280,809.7 L279,809.7 L278,809.5 L277,809.3 L276,809.3 L275,809.4 L274,809.1 L273,809.0 L272,808.5 L271,808.5 L270,809.1 L269,811.6 L268,812.9 L267,810.4 L266,810.4 L265,810.6 L264,809.7 L263,808.8 L262,808.5 L261,808.5 L260,808.9 L259,810.6 L258,811.9 L257,811.4 L256,811.9 L255,813.9 L254,814.4 L253,814.6 L252,815.1 L251,811.7 L250,809.5 L249,808.5 L248,808.5 L247,809.0 L246,810.8 L245,811.8 L244,810.6 L243,812.3 L242,812.5 L241,811.1 L240,809.1 L239,808.5 L238,809.4 L237,813.3 L236,814.4 L235,811.7 L234,812.4 L233,812.2 L232,810.5 L231,811.0 L230,812.0 L229,812.1 L228,811.7 L227,811.1 L226,810.6 L225,812.1 L224,813.0 L223,811.0 L222,809.1 L221,808.5 L220,809.4 L219,813.1 L218,815.8 L217,816.2 L216,815.0 L215,812.2 L214,811.2 L213,812.5 L212,812.7 L211,812.1 L210,811.7 L209,812.3 L208,813.9 L207,814.0 L206,815.9 L205,815.4 L204,814.4 L203,813.9 L202,811.9 L201,811.2 L200,812.4 L199,810.6 L198,809.0 L197,808.5 L196,809.4 L195,812.7 L194,814.8 L193,813.0 L192,815.1 L191,817.5 L190,816.5 L189,812.3 L188,812.7 L187,813.3 L186,811.2 L185,812.1 L184,813.3 L183,812.5 L182,812.7 L181,814.1 L180,815.9 L179,816.9 L178,816.5 L177,815.2 L176,812.6 L175,813.9 L174,814.5 L173,812.1 L172,809.4 L171,808.5 L170,808.5 L169,808.5 L168,809.7 L167,811.7 L166,814.6 L165,815.9 L164,817.4 L163,817.8 L162,816.4 L161,813.8 L160,809.9 L159,809.0 L158,809.2 L157,809.3 L156,809.4 L155,809.3 L154,809.4 L153,809.4 L152,809.6 L151,809.7 L150,809.8 L149,809.6 L148,809.5 L147,809.7 L146,809.6 L145,809.7 L144,809.9 L143,809.6 L142,809.6 L141,809.9 L140,809.7 L139,809.8 L138,809.7 L137,809.7 L136,809.9 L135,809.9 L134,810.1 L133,810.1 L132,809.8 L131,809.9 L130,809.9 L129,809.8 L128,809.8 L127,810.0 L126,810.2 L125,809.8 L124,809.9 L123,809.8 L122,809.8 L121,809.8 L120,809.8 L119,810.0 L118,809.9 L117,809.9 L116,809.8 L115,809.8 L114,810.1 L113,809.9 L112,810.0 L111,810.0 L110,810.2 L109,810.2 L108,810.2 L107,810.2 L106,809.8 L105,810.1 L104,810.1 L103,810.0 L102,810.1 L101,810.3 L100,810.1 L99,810.0 L98,810.0 L97,809.8 L96,809.9 L95,810.0 L94,810.0 L93,809.9 L92,809.8 L91,809.8 L90,809.8 L89,810.2 L88,810.1 L87,809.9 L86,809.9 L85,809.8 L84,810.0 L83,810.0 L82,810.0 L81,809.9 L80,809.8 L79,809.6 L78,809.9 L77,809.7 L76,809.6 L75,809.6 L74,809.8 L73,809.5 L72,809.5 L71,809.5 L70,809.6 L69,809.4 L68,809.6 L67,809.4 L66,809.4 L65,809.5 L64,809.5 L63,809.3 L62,809.2 L61,809.0 L60,808.5 L59,808.5 L58,809.2 L57,812.8 L56,811.9 L55,814.2 L54,815.4 L53,815.6 L52,813.8 L51,812.3 L50,814.5 L49,815.7 L48,814.9 L47,815.3 L46,812.2 L45,809.6 L44,808.5 L43,808.5 L42,810.4 L41,813.1 L40,816.6 L39,817.6 L38,813.5 L37,813.9 L36,815.3 L35,815.3 L34,815.0 L33,812.6 L32,809.4 L31,808.5 L30,810.1 L29,816.1 L28,814.7 L27,815.4 L26,815.5 L25,814.4 L24,817.5 L23,820.0 L22,814.9 L21,819.8 L20,821.2 L19,819.9 L18,817.7 L17,815.3 L16,817.5 L15,818.8 L14,815.7 L13,809.9 L12,808.5 L11,808.5 L10,808.5 L9,808.5 L8,808.5 L7,808.5 L6,808.5 L5,808.5 Z" fill="#888888" stroke="#888888" stroke-width="0.6" stroke-linejoin="round"/>
<path d="M1319,808.5 L1320,807.1 L1321,802.9 L1322,798.5 L1323,799.0 L1324,801.8 L1325,804.1 L1326,804.1 L1327,801.8 L1328,802.1 L1329,803.0 L1330,803.1 L1331,804.6 L1332,802.1 L1333,807.5 L1334,807.7 L1335,804.6 L1336,802.0 L1337,802.8 L1338,805.4 L1339,803.5 L1340,803.9 L1341,806.4 L1342,807.8 L1343,807.4 L1344,803.5 L1345,800.2 L1346,801.0 L1347,801.6 L1348,804.3 L1349,799.1 L1350,800.8 L1351,803.8 L1352,803.4 L1353,802.6 L1354,803.2 L1355,805.4 L1356,803.5 L1357,803.5 L1358,805.1 L1359,804.4 L1360,803.9 L1361,805.4 L1362,807.8 L1363,808.5 L1364,808.5 L1365,808.5 L1366,808.5 L1367,807.8 L1368,805.9 L1369,803.8 L1370,803.7 L1371,804.3 L1372,804.5 L1373,806.1 L1374,805.4 L1375,806.3 L1376,808.0 L1377,808.5 L1378,807.4 L1379,803.3 L1380,801.3 L1381,800.0 L1382,801.1 L1383,804.5 L1384,804.9 L1385,805.9 L1386,808.0 L1387,807.5 L1388,803.8 L1389,801.9 L1390,801.7 L1391,803.4 L1392,805.0 L1393,803.1 L1394,802.1 L1395,805.4 L1396,805.4 L1397,804.5 L1398,804.8 L1399,806.4 L1400,805.7 L1401,805.5 L1402,805.4 L1403,805.1 L1404,805.7 L1405,806.1 L1406,805.2 L1407,803.6 L1408,803.4 L1409,803.0 L1410,803.4 L1411,804.7 L1412,806.0 L1413,804.7 L1414,805.5 L1415,808.0 L1416,808.5 L1417,807.3 L1418,802.9 L1419,798.3 L1420,800.5 L1421,800.6 L1422,802.9 L1423,800.5 L1424,797.4 L1425,797.3 L1426,803.1 L1427,807.2 L1428,808.5 L1429,808.5 L1430,808.5 L1431,808.5 L1432,808.5 L1433,808.5 L1434,808.5 L1435,808.5 L1436,808.5 L1437,807.4 L1438,803.3 L1439,801.3 L1440,800.6 L1441,804.7 L1442,803.6 L1443,802.2 L1444,800.5 L1445,802.0 L1446,802.5 L1447,802.7 L1448,805.1 L1449,803.5 L1450,802.4 L1451,801.9 L1452,801.6 L1453,803.1 L1454,803.1 L1455,805.0 L1456,804.0 L1457,802.5 L1458,802.5 L1459,803.8 L1460,805.7 L1461,804.2 L1462,803.7 L1463,805.0 L1464,801.2 L1465,800.9 L1466,805.0 L1467,803.1 L1468,803.0 L1469,805.0 L1470,807.7 L1471,808.5 L1472,808.5 L1473,808.5 L1474,807.7 L1475,805.3 L1476,802.7 L1477,803.6 L1478,804.3 L1479,804.2 L1480,800.7 L1481,799.6 L1482,804.1 L1483,802.0 L1484,802.2 L1485,802.9 L1486,803.4 L1487,799.9 L1488,797.3 L1489,802.2 L1490,807.1 L1491,804.4 L1492,801.0 L1493,801.5 L1494,803.2 L1495,805.0 L1496,802.7 L1497,802.6 L1498,802.6 L1499,803.1 L1500,804.5 L1501,802.2 L1502,801.5 L1503,801.3 L1504,800.9 L1505,801.5 L1506,803.3 L1507,805.0 L1508,804.9 L1509,804.8 L1510,804.7 L1511,802.6 L1512,800.4 L1513,799.8 L1514,803.5 L1515,807.4 L1516,808.5 L1517,808.5 L1518,807.9 L1519,806.3 L1520,804.9 L1521,804.7 L1522,805.0 L1523,805.4 L1524,805.4 L1525,804.1 L1526,802.7 L1527,801.9 L1528,803.9 L1529,805.4 L1530,804.3 L1531,802.4 L1532,803.4 L1533,805.0 L1534,807.8 L1535,808.5 L1536,808.5 L1537,807.7 L1538,803.8 L1539,802.5 L1540,805.1 L1541,804.7 L1542,804.7 L1543,805.1 L1544,806.3 L1545,804.0 L1546,804.8 L1547,806.7 L1548,807.9 L1549,808.5 L1550,808.5 L1551,808.5 L1552,808.5 L1553,807.4 L1554,803.4 L1555,800.3 L1556,800.9 L1557,803.8 L1558,800.9 L1559,799.6 L1560,799.2 L1561,798.7 L1562,800.4 L1563,803.6 L1564,804.8 L1565,803.8 L1566,803.8 L1567,803.5 L1568,804.4 L1569,805.7 L1570,804.9 L1571,803.5 L1572,803.0 L1573,802.9 L1574,804.2 L1575,804.8 L1576,804.9 L1577,802.6 L1578,800.4 L1579,800.5 L1580,801.2 L1581,804.1 L1582,803.8 L1583,803.4 L1584,803.4 L1585,804.1 L1586,804.1 L1587,801.0 L1588,800.0 L1589,798.6 L1590,800.8 L1591,803.9 L1592,804.3 L1593,803.4 L1594,803.2 L1595,804.1 L1596,803.9 L1597,802.5 L1598,807.4 L1599,808.5 L1600,808.5 L1601,808.5 L1602,807.1 L1603,803.1 L1604,800.4 L1605,798.6 L1606,800.7 L1607,803.5 L1608,803.3 L1609,802.9 L1610,803.2 L1611,804.0 L1612,804.7 L1613,802.8 L1614,801.6 L1615,800.8 L1616,802.1 L1617,804.8 L1618,803.5 L1619,804.2 L1620,805.3 L1621,804.4 L1622,807.6 L1623,808.5 L1624,808.5 L1625,808.5 L1626,808.5 L1627,808.5 L1628,808.5 L1629,808.5 L1630,808.5 L1631,808.5 L1632,808.5 L1633,808.5 L1634,808.5 L1635,808.5 L1636,808.5 L1636,808.5 L1635,808.5 L1634,808.5 L1633,808.5 L1632,808.5 L1631,808.5 L1630,808.5 L1629,808.5 L1628,808.5 L1627,808.5 L1626,808.5 L1625,808.5 L1624,808.5 L1623,808.5 L1622,809.4 L1621,812.7 L1620,811.8 L1619,812.8 L1618,813.6 L1617,812.3 L1616,815.0 L1615,816.4 L1614,815.5 L1613,814.3 L1612,812.4 L1611,813.1 L1610,813.9 L1609,814.3 L1608,813.9 L1607,813.6 L1606,816.5 L1605,818.6 L1604,816.8 L1603,814.1 L1602,809.9 L1601,808.5 L1600,808.5 L1599,808.5 L1598,809.6 L1597,814.6 L1596,813.2 L1595,813.0 L1594,813.9 L1593,813.7 L1592,812.8 L1591,813.2 L1590,816.3 L1589,818.6 L1588,817.2 L1587,816.2 L1586,813.0 L1585,813.0 L1584,813.7 L1583,813.7 L1582,813.3 L1581,813.0 L1580,816.0 L1579,816.7 L1578,816.8 L1577,814.5 L1576,812.1 L1575,812.3 L1574,812.8 L1573,814.3 L1572,814.1 L1571,813.6 L1570,812.2 L1569,811.4 L1568,812.7 L1567,813.6 L1566,813.3 L1565,813.3 L1564,812.3 L1563,813.5 L1562,816.8 L1561,818.5 L1560,818.0 L1559,817.5 L1558,816.2 L1557,813.3 L1556,816.2 L1555,816.8 L1554,813.7 L1553,809.6 L1552,808.5 L1551,808.5 L1550,808.5 L1549,808.5 L1548,809.2 L1547,810.3 L1546,812.3 L1545,813.1 L1544,810.7 L1543,811.9 L1542,812.4 L1541,812.4 L1540,812.0 L1539,814.7 L1538,813.3 L1537,809.4 L1536,808.5 L1535,808.5 L1534,809.2 L1533,812.1 L1532,813.7 L1531,814.7 L1530,812.8 L1529,811.7 L1528,813.2 L1527,815.2 L1526,814.4 L1525,812.9 L1524,811.7 L1523,811.7 L1522,812.1 L1521,812.4 L1520,812.2 L1519,810.8 L1518,809.1 L1517,808.5 L1516,808.5 L1515,809.7 L1514,813.6 L1513,817.4 L1512,816.8 L1511,814.6 L1510,812.4 L1509,812.3 L1508,812.2 L1507,812.1 L1506,813.8 L1505,815.7 L1504,816.2 L1503,815.8 L1502,815.6 L1501,815.0 L1500,812.5 L1499,814.0 L1498,814.5 L1497,814.5 L1496,814.4 L1495,812.1 L1494,813.9 L1493,815.6 L1492,816.2 L1491,812.7 L1490,810.0 L1489,814.9 L1488,819.9 L1487,817.3 L1486,813.7 L1485,814.2 L1484,814.9 L1483,815.1 L1482,813.0 L1481,817.6 L1480,816.4 L1479,812.9 L1478,812.8 L1477,813.5 L1476,814.4 L1475,811.7 L1474,809.3 L1473,808.5 L1472,808.5 L1471,808.5 L1470,809.4 L1469,812.1 L1468,814.1 L1467,814.0 L1466,812.1 L1465,816.3 L1464,815.9 L1463,812.0 L1462,813.4 L1461,812.9 L1460,811.3 L1459,813.3 L1458,814.6 L1457,814.6 L1456,813.1 L1455,812.1 L1454,814.0 L1453,814.0 L1452,815.6 L1451,815.3 L1450,814.8 L1449,813.6 L1448,812.0 L1447,814.4 L1446,814.6 L1445,815.1 L1444,816.6 L1443,814.9 L1442,813.5 L1441,812.4 L1440,816.6 L1439,815.8 L1438,813.8 L1437,809.6 L1436,808.5 L1435,808.5 L1434,808.5 L1433,808.5 L1432,808.5 L1431,808.5 L1430,808.5 L1429,808.5 L1428,808.5 L1427,809.9 L1426,814.0 L1425,819.9 L1424,819.8 L1423,816.6 L1422,814.2 L1421,816.6 L1420,816.7 L1419,818.9 L1418,814.2 L1417,809.7 L1416,808.5 L1415,809.0 L1414,811.5 L1413,812.4 L1412,811.0 L1411,812.4 L1410,813.7 L1409,814.1 L1408,813.7 L1407,813.5 L1406,811.9 L1405,811.0 L1404,811.3 L1403,812.0 L1402,811.7 L1401,811.5 L1400,811.4 L1399,810.7 L1398,812.2 L1397,812.6 L1396,811.7 L1395,811.7 L1394,815.0 L1393,814.0 L1392,812.1 L1391,813.7 L1390,815.4 L1389,815.3 L1388,813.3 L1387,809.6 L1386,809.1 L1385,811.2 L1384,812.2 L1383,812.6 L1382,816.1 L1381,817.2 L1380,815.9 L1379,813.8 L1378,809.7 L1377,808.5 L1376,809.0 L1375,810.7 L1374,811.7 L1373,811.0 L1372,812.6 L1371,812.8 L1370,813.4 L1369,813.3 L1368,811.2 L1367,809.2 L1366,808.5 L1365,808.5 L1364,808.5 L1363,808.5 L1362,809.2 L1361,811.7 L1360,813.2 L1359,812.7 L1358,811.9 L1357,813.7 L1356,813.6 L1355,811.6 L1354,813.9 L1353,814.5 L1352,813.7 L1351,813.3 L1350,816.4 L1349,818.1 L1348,812.8 L1347,815.5 L1346,816.1 L1345,817.0 L1344,813.6 L1343,809.7 L1342,809.3 L1341,810.6 L1340,813.2 L1339,813.6 L1338,811.6 L1337,814.3 L1336,815.2 L1335,812.5 L1334,809.3 L1333,809.6 L1332,815.1 L1331,812.5 L1330,814.0 L1329,814.1 L1328,815.0 L1327,815.3 L1326,813.0 L1325,813.0 L1324,815.3 L1323,818.2 L1322,818.7 L1321,814.2 L1320,809.9 L1319,808.5 Z" fill="#c6c6c6" stroke="#c6c6c6" stroke-width="0.6" stroke-linejoin="round"/>
<rect x="5" y="808" width="1314" height="1.2" fill="#b2b2b2"/>
<rect x="1319" y="808" width="318" height="1.2" fill="#d9d9d9"/>
<rect x="5" y="824" width="1632" height="4" fill="#858585"/>
<rect x="5" y="824" width="853" height="4" fill="#fe0000"/>
</svg>
</body>
</html>
